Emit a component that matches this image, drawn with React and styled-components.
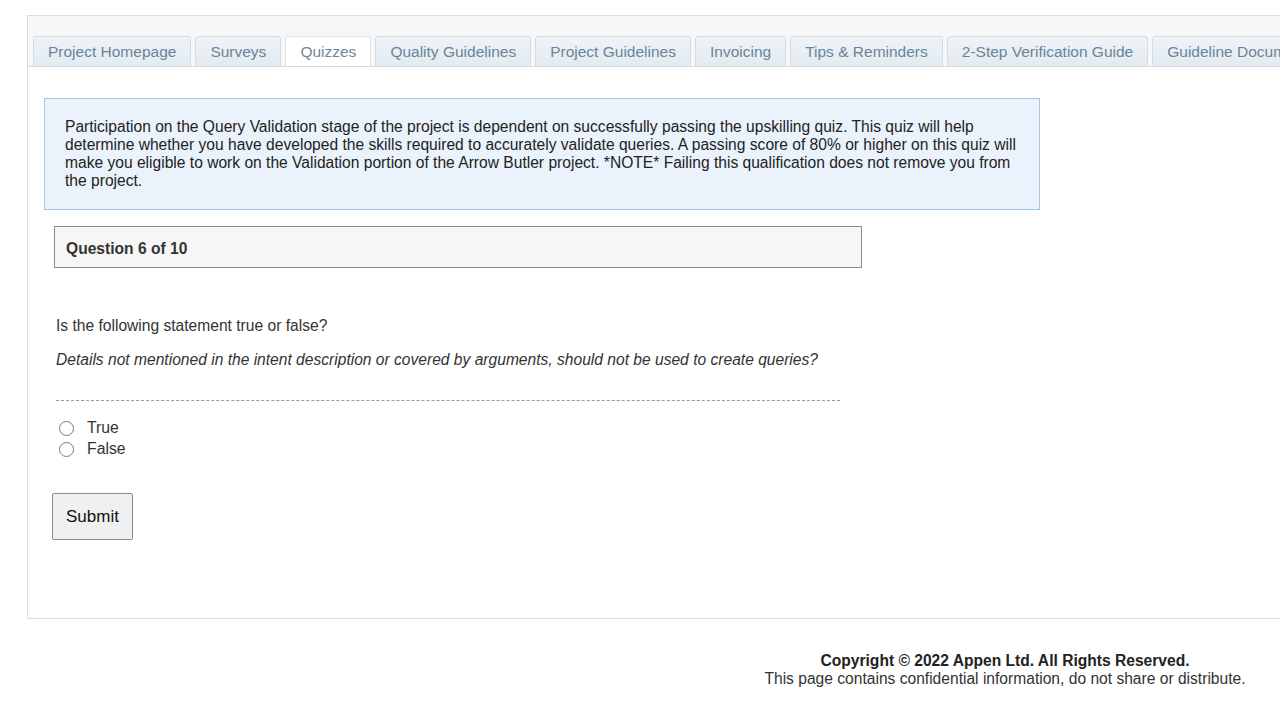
import React from "react";
import styled, { createGlobalStyle } from "styled-components";

const Global = createGlobalStyle`
  html, body { margin: 0; padding: 0; background: #fff; overflow: hidden; }
  body { font-family: "Liberation Sans", Arial, sans-serif; color: #333; }
  * { box-sizing: border-box; }
`;

const Page = styled.div`
  width: 1280px;
  height: 720px;
  overflow: hidden;
  padding-top: 15px;
`;

const Frame = styled.div`
  margin-left: 27px;
  width: 1300px;
  height: 604px;
  border: 1px solid #dcdcdc;
  border-right: none;
  display: flex;
  flex-direction: column;
`;

const Header = styled.div`
  background: #f7f7f7;
  padding: 20px 0 0 5px;
  border-bottom: 1px solid #d3dde5;
  display: flex;
  overflow: hidden;
`;

const Tab = styled.div`
  flex: none;
  height: 31px;
  padding: 0 14px;
  margin-right: 4px;
  margin-bottom: -1px;
  display: flex;
  align-items: center;
  font-size: 15.5px;
  color: ${(p) => (p.$active ? "#72879a" : "#6a8499")};
  background: ${(p) =>
    p.$active ? "#ffffff" : "linear-gradient(#eef3f7, #e2ebf1)"};
  border: 1px solid ${(p) => (p.$active ? "#dfe6eb" : "#d0dde6")};
  border-bottom: 1px solid ${(p) => (p.$active ? "#ffffff" : "#d0dde6")};
  border-radius: 3px 3px 0 0;
  white-space: nowrap;
`;

const Content = styled.div`
  padding: 31px 0 0 16px;
  display: flex;
  flex-direction: column;
  align-items: flex-start;
`;

const InfoBox = styled.div`
  width: 996px;
  background: #eaf3fb;
  border: 1px solid #a7c6de;
  padding: 19px 14px 19px 20px;
  font-size: 15.6px;
  line-height: 18px;
  color: #222;
`;

const QuestionBox = styled.div`
  margin: 16px 0 0 10px;
  width: 808px;
  height: 42px;
  background: #f6f6f6;
  border: 1px solid #8a8a8a;
  padding: 3px 11px 0;
  display: flex;
  align-items: center;
  font-size: 15.6px;
  font-weight: bold;
  color: #333;
`;

const Body = styled.div`
  margin-left: 12px;
  padding-top: 49px;
  width: 784px;
`;

const Prompt = styled.p`
  margin: 0;
  font-size: 15.6px;
  line-height: 18px;
  color: #333;
  font-style: ${(p) => (p.$italic ? "italic" : "normal")};
  margin-bottom: ${(p) => p.$mb || 0}px;
`;

const Divider = styled.div`
  margin-top: 31px;
  border-top: 1px dashed #9a9a9a;
`;

const Options = styled.div`
  margin-top: 18px;
  display: flex;
  flex-direction: column;
  gap: 3px;
  padding-left: 3px;
`;

const Option = styled.label`
  display: flex;
  align-items: center;
  gap: 13px;
  font-size: 15.8px;
  line-height: 18px;
  color: #333;
`;

const Radio = styled.input.attrs({ type: "radio" })`
  appearance: none;
  margin: 0;
  width: 15px;
  height: 15px;
  border-radius: 50%;
  border: 1px solid #7a7a7a;
  background: #fff;
`;

const SubmitButton = styled.button`
  margin: 35px 0 0 -4px;
  width: 81px;
  height: 47px;
  font-family: "Liberation Sans", Arial, sans-serif;
  font-size: 17px;
  color: #111;
  background: #f0f0f0;
  border: 1px solid #8c8c8c;
  border-radius: 2px;
`;

const Footer = styled.footer`
  margin-left: 730px;
  width: 550px;
  padding-top: 33px;
  text-align: center;
  font-size: 15.6px;
  line-height: 18px;
  color: #333;
`;

const Copyright = styled.div`
  font-weight: bold;
  color: #222;
`;

const tabs = [
  "Project Homepage",
  "Surveys",
  "Quizzes",
  "Quality Guidelines",
  "Project Guidelines",
  "Invoicing",
  "Tips & Reminders",
  "2-Step Verification Guide",
  "Guideline Documents",
];

export default function App() {
  return (
    <Page>
      <Global />
      <Frame>
        <Header>
          {tabs.map((t) => (
            <Tab key={t} $active={t === "Quizzes"}>
              {t}
            </Tab>
          ))}
        </Header>
        <Content>
          <InfoBox>
            Participation on the Query Validation stage of the project is dependent on
            successfully passing the upskilling quiz. This quiz will help determine whether
            you have developed the skills required to accurately validate queries. A passing
            score of 80% or higher on this quiz will make you eligible to work on the
            Validation portion of the Arrow Butler project. *NOTE* Failing this qualification
            does not remove you from the project.
          </InfoBox>
          <QuestionBox>Question 6 of 10</QuestionBox>
          <Body>
            <Prompt $mb={16}>Is the following statement true or false?</Prompt>
            <Prompt $italic>
              Details not mentioned in the intent description or covered by arguments, should
              not be used to create queries?
            </Prompt>
            <Divider />
            <Options>
              <Option>
                <Radio name="q6" />
                True
              </Option>
              <Option>
                <Radio name="q6" />
                False
              </Option>
            </Options>
            <SubmitButton>Submit</SubmitButton>
          </Body>
        </Content>
      </Frame>
      <Footer>
        <Copyright>Copyright © 2022 Appen Ltd. All Rights Reserved.</Copyright>
        <div>This page contains confidential information, do not share or distribute.</div>
      </Footer>
    </Page>
  );
}
